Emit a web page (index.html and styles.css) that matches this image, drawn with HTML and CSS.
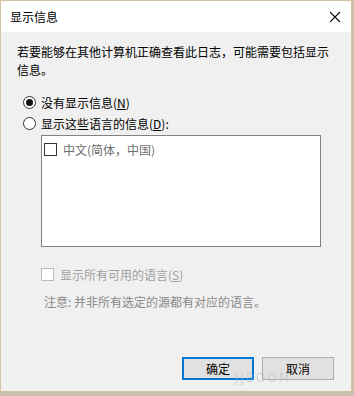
FILE: index.html
```html
<!DOCTYPE html>
<html lang="zh-CN">
<head>
<meta charset="utf-8">
<title>显示信息</title>
<link rel="stylesheet" href="styles.css">
</head>
<body>
<div class="window">
  <div class="titlebar">
    <span class="title">显示信息</span>
    <svg class="close" width="12" height="12" viewBox="0 0 12 12"><path d="M1 1 L11 11 M11 1 L1 11" stroke="#111" stroke-width="1.1" fill="none"/></svg>
  </div>
  <div class="content">
    <p class="intro">若要能够在其他计算机正确查看此日志，可能需要包括显示信息。</p>
    <div class="radios">
      <div class="radio-row"><span class="radio checked"></span><span class="label">没有显示信息(<u>N</u>)</span></div>
      <div class="radio-row"><span class="radio"></span><span class="label">显示这些语言的信息(<u>D</u>):</span></div>
    </div>
    <div class="listbox">
      <div class="list-item"><span class="check"></span><span class="item-text">中文(简体，中国)</span></div>
    </div>
    <div class="check-row"><span class="check disabled"></span><span class="disabled-text">显示所有可用的语言(<u>S</u>)</span></div>
    <p class="note">注意: 并非所有选定的源都有对应的语言。</p>
    <div class="buttons">
      <button class="btn primary">确定</button>
      <button class="btn">取消</button>
    </div>
    <div class="watermark">JJBOOM</div>
  </div>
</div>
</body>
</html>
```
FILE: styles.css
```css
* { box-sizing: border-box; }
html, body { margin: 0; padding: 0; }
body {
  width: 354px;
  height: 396px;
  background: #cbbfa9;
  font-family: "Noto Sans CJK SC", "Microsoft YaHei", sans-serif;
  font-size: 12px;
  color: #000;
  overflow: hidden;
}
.window {
  width: 352px;
  height: 392px;
  border: 1px solid #d2c3a6;
  background: #f0f0f0;
  display: flex;
  flex-direction: column;
}
.titlebar {
  height: 31px;
  background: #fff;
  display: flex;
  align-items: center;
  justify-content: space-between;
  padding: 0 10px 0 9px;
  flex: none;
}
.title { font-size: 12px; line-height: 16px; }
.close { display: block; }
.content {
  position: relative;
  flex: 1;
  display: flex;
  flex-direction: column;
  padding: 11px 17px 11px 16px;
}
.intro {
  margin: 0;
  line-height: 18px;
  width: 316px;
}
.radios {
  margin-top: 13px;
  padding-left: 6px;
}
.radio-row {
  height: 21px;
  display: flex;
  align-items: center;
}
.radio {
  width: 13px;
  height: 13px;
  border: 1px solid #333;
  border-radius: 50%;
  background: #fff;
  display: flex;
  align-items: center;
  justify-content: center;
  flex: none;
}
.radio.checked::after {
  content: "";
  width: 7px;
  height: 7px;
  border-radius: 50%;
  background: #111;
}
.label { margin-left: 5px; }
.listbox {
  margin-top: 1px;
  margin-left: 24px;
  width: 280px;
  height: 112px;
  background: #fff;
  border: 1px solid #828282;
  padding: 5px 2px;
}
.list-item {
  display: flex;
  align-items: center;
  height: 16px;
}
.check {
  width: 13px;
  height: 13px;
  border: 1px solid #333;
  background: #fff;
  flex: none;
}
.item-text {
  margin-left: 6px;
  color: #6d6d6d;
}
.check-row {
  margin-top: 19px;
  margin-left: 24px;
  height: 16px;
  display: flex;
  align-items: center;
}
.check.disabled { border-color: #bcbcbc; }
.disabled-text {
  margin-left: 6px;
  color: #a0a0a0;
}
.note {
  margin: 11px 0 0 27px;
  line-height: 18px;
  color: #8a8a8a;
}
.buttons {
  margin-top: auto;
  display: flex;
  justify-content: flex-end;
  gap: 8px;
}
.btn {
  width: 72px;
  height: 23px;
  font-family: inherit;
  font-size: 12px;
  color: #000;
  background: #e1e1e1;
  border: 1px solid #adadad;
  padding: 0;
}
.btn.primary {
  border: 2px solid #0078d7;
}
.watermark {
  position: absolute;
  right: 60px;
  bottom: 6px;
  font-family: "DejaVu Sans", sans-serif;
  font-size: 12px;
  letter-spacing: 2px;
  color: rgba(180, 190, 200, 0.55);
}
```
